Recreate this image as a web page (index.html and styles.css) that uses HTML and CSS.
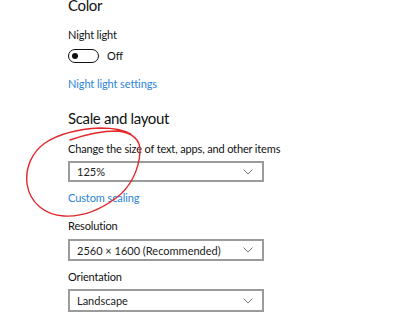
FILE: index.html
```html
<!DOCTYPE html>
<html>
<head>
<meta charset="utf-8">
<link rel="stylesheet" href="styles.css">
</head>
<body>
<div class="page">
  <h2 class="heading first">Color</h2>
  <div class="label nl">Night light</div>
  <div class="toggle-row">
    <span class="toggle"><span class="knob"></span></span>
    <span class="state">Off</span>
  </div>
  <a class="link nls">Night light settings</a>
  <h2 class="heading scale">Scale and layout</h2>
  <div class="label change">Change the size of text, apps, and other items</div>
  <div class="select s1"><span>125%</span><svg class="chev" width="10" height="6" viewBox="0 0 10 6"><path d="M0.5 0.5 L5 5 L9.5 0.5" fill="none" stroke="#777" stroke-width="1"/></svg></div>
  <a class="link custom">Custom scaling</a>
  <div class="label res">Resolution</div>
  <div class="select s2"><span>2560 × 1600 (Recommended)</span><svg class="chev" width="10" height="6" viewBox="0 0 10 6"><path d="M0.5 0.5 L5 5 L9.5 0.5" fill="none" stroke="#777" stroke-width="1"/></svg></div>
  <div class="label ori">Orientation</div>
  <div class="select s3"><span>Landscape</span><svg class="chev" width="10" height="6" viewBox="0 0 10 6"><path d="M0.5 0.5 L5 5 L9.5 0.5" fill="none" stroke="#777" stroke-width="1"/></svg></div>
  <svg class="annot" width="400" height="336" viewBox="0 0 400 336">
    <path d="M70 140 C84 135 102 131 117 131 C132 132 141 140 140 152 C139 170 130 188 116 198 C100 210 82 217 64 216 C45 215 30 203 27 184 C25 168 32 152 45 143 C60 133 80 129 100 128 C114 128 124 130 131 134" fill="none" stroke="#e3262a" stroke-width="1.4" stroke-linecap="round"/>
  </svg>
</div>
</body>
</html>
```
FILE: styles.css
```css
html, body {
  margin: 0;
  padding: 0;
  background: #ffffff;
}
.page {
  position: relative;
  width: 400px;
  height: 336px;
  overflow: hidden;
  padding-left: 68px;
  box-sizing: border-box;
  font-family: Lato, "Noto Sans", "DejaVu Sans", sans-serif;
  color: #111;
}
.heading {
  margin: 0;
  font-size: 15px;
  line-height: 20px;
  font-weight: 400;
  letter-spacing: -0.35px;
}
.heading.first { margin-top: -5px; }
.label {
  font-size: 11px;
  line-height: 15px;
  letter-spacing: -0.15px;
}
.link {
  display: block;
  font-size: 11px;
  line-height: 15px;
  color: #2b84d8;
  letter-spacing: -0.1px;
}
.nl { margin-top: 12px; }
.toggle-row {
  margin-top: 7px;
  display: flex;
  align-items: center;
  height: 14px;
}
.toggle {
  width: 31px;
  height: 14px;
  box-sizing: border-box;
  border: 1.5px solid #111;
  border-radius: 7px;
  display: flex;
  align-items: center;
  padding-left: 3px;
}
.knob {
  width: 6px;
  height: 6px;
  border-radius: 50%;
  background: #111;
}
.state {
  margin-left: 8px;
  font-size: 11px;
  line-height: 14px;
}
.nls { margin-top: 13px; }
.scale { margin-top: 17px; }
.change { margin-top: 13px; }
.select {
  width: 196px;
  box-sizing: border-box;
  border: 2px solid #9b9b9b;
  display: flex;
  align-items: center;
  justify-content: space-between;
  padding: 0 9px 0 7px;
  font-size: 11px;
  line-height: 15px;
  color: #222;
}
.s1 { margin-top: 5px; height: 21px; }
.custom { margin-top: 8px; }
.res { margin-top: 13px; }
.s2 { margin-top: 6px; height: 22px; }
.ori { margin-top: 8px; }
.s3 { margin-top: 5px; height: 23px; }
.annot {
  position: absolute;
  left: 0;
  top: 0;
  pointer-events: none;
}
```
